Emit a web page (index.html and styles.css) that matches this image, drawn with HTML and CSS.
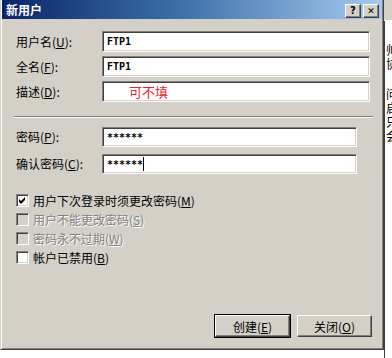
FILE: index.html
```html
<!DOCTYPE html>
<html lang="zh-CN">
<head>
    <meta charset="UTF-8">
    <title>新用户</title>
    <link rel="stylesheet" href="styles.css">
</head>
<body>
    <div class="screen">
        <div class="dialog">
            <div class="titlebar">
                <span class="title">新用户</span>
                <div class="title-buttons">
                    <span class="tbtn">?</span>
                    <span class="tbtn close">&#x2715;</span>
                </div>
            </div>

            <div class="dialog-body">
                <div class="fields">
                    <div class="row">
                        <label class="label">用户名(<u>U</u>):</label>
                        <div class="input wide">FTP1</div>
                    </div>
                    <div class="row">
                        <label class="label">全名(<u>F</u>):</label>
                        <div class="input wide">FTP1</div>
                    </div>
                    <div class="row">
                        <label class="label">描述(<u>D</u>):</label>
                        <div class="input wide"><span class="note">可不填</span></div>
                    </div>
                </div>

                <div class="separator"></div>

                <div class="fields pw">
                    <div class="row">
                        <label class="label">密码(<u>P</u>):</label>
                        <div class="input narrow">******</div>
                    </div>
                    <div class="row">
                        <label class="label">确认密码(<u>C</u>):</label>
                        <div class="input narrow">******<span class="caret"></span></div>
                    </div>
                </div>

                <div class="checks">
                    <div class="check">
                        <span class="box checked">
                            <svg width="7" height="7" viewBox="0 0 7 7"><path d="M0 2 L2 4 L6 0 L6 3 L2 7 L0 5 Z" fill="#000"/></svg>
                        </span>
                        <span>用户下次登录时须更改密码(<u>M</u>)</span>
                    </div>
                    <div class="check disabled">
                        <span class="box"></span>
                        <span>用户不能更改密码(<u>S</u>)</span>
                    </div>
                    <div class="check disabled">
                        <span class="box"></span>
                        <span>密码永不过期(<u>W</u>)</span>
                    </div>
                    <div class="check">
                        <span class="box"></span>
                        <span>帐户已禁用(<u>B</u>)</span>
                    </div>
                </div>

                <div class="actions">
                    <button class="btn default">创建(<u>E</u>)</button>
                    <button class="btn">关闭(<u>O</u>)</button>
                </div>
            </div>
        </div>

        <div class="behind">
            <div class="behind-top"></div>
            <div class="behind-panel">
                <div class="ch">帅</div>
                <div class="ch">协</div>
                <div class="gap"></div>
                <div class="ch">问</div>
                <div class="ch">启</div>
                <div class="ch">只</div>
                <div class="ch">会</div>
            </div>
        </div>
    </div>
</body>
</html>
```

FILE: styles.css
```css
* {
    margin: 0;
    padding: 0;
    box-sizing: border-box;
}

body {
    background: #fff;
    font-family: "Noto Sans CJK SC", "DejaVu Sans", sans-serif;
    font-size: 12px;
    color: #000;
    overflow: hidden;
}

u {
    text-decoration: underline;
}

.screen {
    display: flex;
    width: 392px;
    height: 358px;
    background: #fff;
}

/* dialog window */
.dialog {
    width: 384px;
    height: 350px;
    flex-shrink: 0;
    background: #d4d0c8;
    border-left: 1px solid #d4d0c8;
    border-right: 1px solid #404040;
    border-bottom: 1px solid #404040;
    box-shadow: inset 1px 0 #fff, inset -1px -1px #808080;
    padding: 0 2px 2px 2px;
    display: flex;
    flex-direction: column;
}

.titlebar {
    height: 19px;
    margin: 0 -1px 0 -1px;
    background: linear-gradient(to right, #0a246a 0%, #3a6ea5 45%, #a6caf0 100%);
    display: flex;
    align-items: center;
    justify-content: space-between;
    padding: 0 3px 0 4px;
}

.title {
    color: #fff;
    font-weight: bold;
    font-size: 12px;
    line-height: 14px;
}

.title-buttons {
    display: flex;
    gap: 2px;
    margin-top: 2px;
}

.tbtn {
    width: 16px;
    height: 14px;
    background: #d4d0c8;
    border: 1px solid;
    border-color: #fff #404040 #404040 #fff;
    box-shadow: inset -1px -1px #808080;
    font-family: "DejaVu Sans", sans-serif;
    font-weight: bold;
    font-size: 10px;
    line-height: 12px;
    text-align: center;
}

.tbtn.close {
    font-size: 9px;
}

.dialog-body {
    flex: 1;
    display: flex;
    flex-direction: column;
    padding: 12px 9px 10px 13px;
}

.fields {
    display: flex;
    flex-direction: column;
    gap: 4px;
}

.row {
    display: flex;
    align-items: center;
}

.label {
    width: 86px;
    flex-shrink: 0;
    line-height: 14px;
}

.input {
    height: 21px;
    background: #fff;
    border: 1px solid;
    border-color: #808080 #fff #fff #808080;
    box-shadow: inset 1px 1px #404040, inset -1px -1px #d4d0c8;
    padding: 3px 4px;
    font-family: "DejaVu Sans Mono", monospace;
    font-size: 10px;
    font-weight: bold;
    line-height: 13px;
    display: flex;
    align-items: center;
}

.input.wide {
    width: 268px;
}

.input.narrow {
    width: 255px;
    height: 20px;
}

.note {
    margin-left: 22px;
    color: #e8202a;
    font-family: "Noto Sans CJK SC", sans-serif;
    font-weight: normal;
    font-size: 13px;
}

.caret {
    width: 1px;
    height: 14px;
    background: #000;
}

.separator {
    height: 2px;
    margin: 14px 0 9px -2px;
    width: 359px;
    border-top: 1px solid #808080;
    border-bottom: 1px solid #fff;
}

.fields.pw {
    gap: 7px;
}

/* checkboxes */
.checks {
    margin-top: 17px;
    display: flex;
    flex-direction: column;
}

.check {
    height: 19px;
    display: flex;
    align-items: center;
    gap: 4px;
}

.box {
    width: 13px;
    height: 13px;
    background: #fff;
    border: 1px solid;
    border-color: #808080 #fff #fff #808080;
    box-shadow: inset 1px 1px #404040, inset -1px -1px #d4d0c8;
    display: flex;
    align-items: center;
    justify-content: center;
}

.check.disabled {
    color: #808080;
    text-shadow: 1px 1px #fff;
}

.check.disabled .box {
    background: #d4d0c8;
}

/* buttons */
.actions {
    margin-top: auto;
    display: flex;
    justify-content: flex-end;
    gap: 7px;
}

.btn {
    width: 75px;
    height: 22px;
    background: #d4d0c8;
    border: 1px solid;
    border-color: #fff #404040 #404040 #fff;
    box-shadow: inset -1px -1px #808080;
    font-family: "Noto Sans CJK SC", sans-serif;
    font-size: 12px;
    color: #000;
}

.btn.default {
    outline: 1px solid #000;
    outline-offset: 0;
}

/* window lying behind the dialog */
.behind {
    flex: 1;
    display: flex;
    flex-direction: column;
    overflow: hidden;
}

.behind-top {
    height: 21px;
    background: #d4d0c8;
    border-bottom: 1px solid #fff;
}

.behind-panel {
    flex: 1;
    border-left: 1px solid #404040;
    background: #fff;
    padding: 22px 0 0 1px;
    white-space: nowrap;
}

.behind-panel .ch {
    height: 14px;
    line-height: 14px;
    font-size: 12px;
    overflow: hidden;
}

.behind-panel .gap {
    height: 16px;
}
```
